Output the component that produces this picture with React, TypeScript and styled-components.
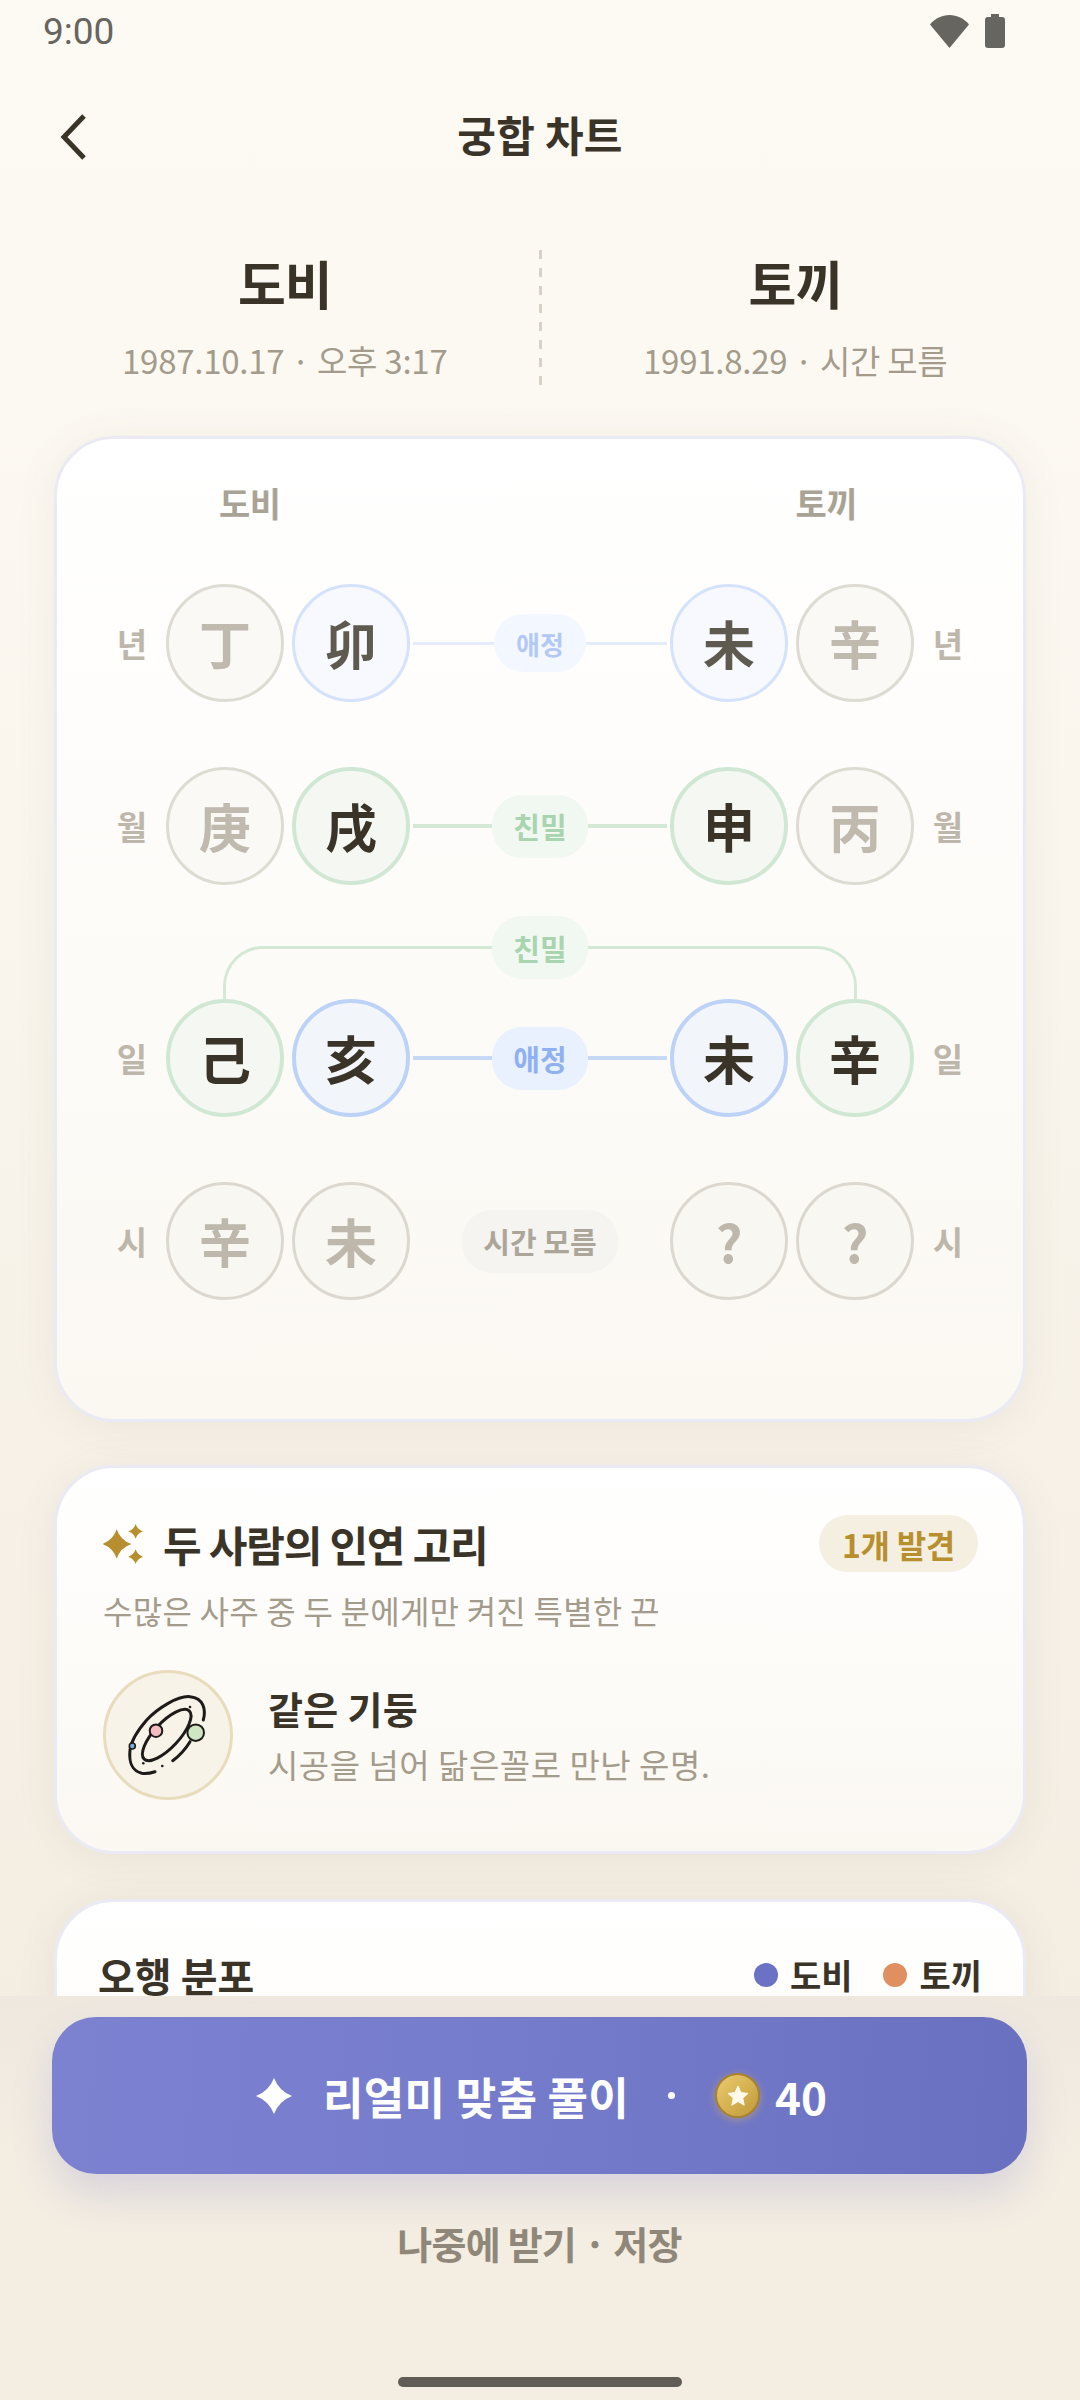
import styled, { createGlobalStyle } from "styled-components";

type Tone = "muted" | "faint" | "softBlue" | "green" | "blue";

const circleTones = {
  muted: { line: "#dedbd3", bg: "#faf9f6", ink: "#bfb9ae", width: 3 },
  faint: { line: "#dcd8cf", bg: "#f9f7f2", ink: "#bdb8ab", width: 3 },
  softBlue: { line: "#d4e2fb", bg: "#f7f9fe", ink: "#5f5a50", width: 3 },
  green: { line: "#d0e8d3", bg: "#f5f8f2", ink: "#3a3328", width: 4 },
  blue: { line: "#bcd2f7", bg: "#f2f5fa", ink: "#3a3328", width: 4 },
};

const chipTones = {
  softBlue: { bg: "#f3f7ff", ink: "#b3c9f5", line: "#e4ecfb", weight: 3 },
  green: { bg: "#f1f7f1", ink: "#a9d4b0", line: "#d3e8d5", weight: 4 },
  blue: { bg: "#e9f1fe", ink: "#8fb1f2", line: "#c5d8f6", weight: 4 },
  grey: { bg: "#f5f4f0", ink: "#aca69a", line: "transparent", weight: 0 },
};

type ChipTone = keyof typeof chipTones;

interface PillarRow {
  label: string;
  cells: [string, Tone][];
  chip: string;
  chipTone: ChipTone;
}

const rows: PillarRow[] = [
  {
    label: "년",
    cells: [["丁", "muted"], ["卯", "softBlue"], ["未", "softBlue"], ["辛", "muted"]],
    chip: "애정",
    chipTone: "softBlue",
  },
  {
    label: "월",
    cells: [["庚", "muted"], ["戌", "green"], ["申", "green"], ["丙", "muted"]],
    chip: "친밀",
    chipTone: "green",
  },
  {
    label: "일",
    cells: [["己", "green"], ["亥", "blue"], ["未", "blue"], ["辛", "green"]],
    chip: "애정",
    chipTone: "blue",
  },
  {
    label: "시",
    cells: [["辛", "faint"], ["未", "faint"], ["?", "faint"], ["?", "faint"]],
    chip: "시간 모름",
    chipTone: "grey",
  },
];

function Row({ row }: { row: PillarRow }) {
  return (
    <ChartRow>
      <RowLabel>{row.label}</RowLabel>
      <Circle $tone={row.cells[0][1]}>{row.cells[0][0]}</Circle>
      <Circle $tone={row.cells[1][1]}>{row.cells[1][0]}</Circle>
      <Bridge>
        <BridgeLine $tone={row.chipTone} />
        <Chip $tone={row.chipTone} $small={row.chipTone === "softBlue"}>
          {row.chip}
        </Chip>
        <BridgeLine $tone={row.chipTone} />
      </Bridge>
      <Circle $tone={row.cells[2][1]}>{row.cells[2][0]}</Circle>
      <Circle $tone={row.cells[3][1]}>{row.cells[3][0]}</Circle>
      <RowLabel>{row.label}</RowLabel>
    </ChartRow>
  );
}

function OrbitIcon() {
  return (
    <svg width="130" height="130" viewBox="0 0 130 130" fill="none" stroke="#1c1b19" strokeLinecap="round">
      <path
        d="M100.3 50C103 40 101 28 87 26.7C75 25.5 55 38 43.7 50C35 60 28 72 27 80C26 90 27 100 38.7 103.3C43 104 48 103 52 101.7"
        strokeWidth="3"
      />
      <path d="M87 71.7C82 80 76 86 69.7 90.7" strokeWidth="3" />
      <ellipse cx="63.7" cy="65" rx="33" ry="12.5" transform="rotate(-47 63.7 65)" strokeWidth="3" />
      <circle cx="53" cy="60.7" r="6.3" fill="#f2bcc0" strokeWidth="2" />
      <circle cx="92.7" cy="62.7" r="8.3" fill="#cfe6c3" strokeWidth="2" />
      <circle cx="29.3" cy="76" r="3" fill="#7fa9d8" strokeWidth="1.6" />
      <circle cx="87" cy="37" r="1.3" fill="#1c1b19" stroke="none" />
      <circle cx="40.3" cy="93.3" r="1.3" fill="#1c1b19" stroke="none" />
      <circle cx="59.3" cy="96" r="1.3" fill="#1c1b19" stroke="none" />
    </svg>
  );
}

export default function App() {
  return (
    <>
      <GlobalStyle />
      <Page>
        <StatusBar>
          <Clock>9:00</Clock>
          <StatusIcons>
            <svg width="39" height="33" viewBox="0 0 39 33">
              <path d="M0 9.5C5 3.5 12 0 19.5 0S34 3.5 39 9.5L19.5 33Z" fill="#66655f" />
            </svg>
            <svg width="20" height="34" viewBox="0 0 20 34">
              <path d="M6 0H14V3H17A3 3 0 0 1 20 6V31A3 3 0 0 1 17 34H3A3 3 0 0 1 0 31V6A3 3 0 0 1 3 3H6Z" fill="#66655f" />
            </svg>
          </StatusIcons>
        </StatusBar>

        <Header>
          <BackButton type="button">
            <svg width="26" height="46" viewBox="0 0 26 46" fill="none">
              <path d="M24 2L4 23L24 44" stroke="#3a3328" strokeWidth="5" />
            </svg>
          </BackButton>
          <Title>궁합 차트</Title>
        </Header>

        <People>
          <Person>
            <PersonName>도비</PersonName>
            <PersonDate>1987.10.17 · 오후 3:17</PersonDate>
          </Person>
          <PeopleDivider />
          <Person>
            <PersonName>토끼</PersonName>
            <PersonDate>1991.8.29 · 시간 모름</PersonDate>
          </Person>
        </People>

        <ChartCard>
          <ChartNames>
            <span>도비</span>
            <span>토끼</span>
          </ChartNames>
          <Row row={rows[0]} />
          <Row row={rows[1]} />
          <Arc>
            <ArcChip>
              <Chip $tone="green">친밀</Chip>
            </ArcChip>
          </Arc>
          <Row row={rows[2]} />
          <Row row={rows[3]} />
        </ChartCard>

        <BondCard>
          <BondHead>
            <BondTitle>
              <svg width="40" height="40" viewBox="0 0 38 38">
                <path d="M13 5Q16.5 15.5 27 19Q16.5 22.5 13 33Q9.5 22.5 -1 19Q9.5 15.5 13 5Z" fill="#b88f2f" />
                <path d="M31 0Q32.8 5.2 38 7Q32.8 8.8 31 14Q29.2 8.8 24 7Q29.2 5.2 31 0Z" fill="#b88f2f" />
                <path d="M31 24Q32.8 29.2 38 31Q32.8 32.8 31 38Q29.2 32.8 24 31Q29.2 29.2 31 24Z" fill="#b88f2f" />
              </svg>
              두 사람의 인연 고리
            </BondTitle>
            <FoundBadge>1개 발견</FoundBadge>
          </BondHead>
          <BondSub>수많은 사주 중 두 분에게만 켜진 특별한 끈</BondSub>
          <BondItem>
            <OrbitBadge>
              <OrbitIcon />
            </OrbitBadge>
            <BondText>
              <BondName>같은 기둥</BondName>
              <BondDesc>시공을 넘어 닮은꼴로 만난 운명.</BondDesc>
            </BondText>
          </BondItem>
        </BondCard>

        <ElementCard>
          <ElementTitle>오행 분포</ElementTitle>
          <Legend>
            <LegendItem $color="#6b71c4">도비</LegendItem>
            <LegendItem $color="#e09060">토끼</LegendItem>
          </Legend>
        </ElementCard>

        <BottomSheet>
          <CtaButton type="button">
            <svg width="36" height="36" viewBox="0 0 36 36">
              <path d="M18 0Q23 13 36 18Q23 23 18 36Q13 23 0 18Q13 13 18 0Z" fill="#fff" />
            </svg>
            <CtaLabel>리얼미 맞춤 풀이</CtaLabel>
            <CtaDot />
            <Coin>
              <svg width="24" height="24" viewBox="0 0 24 24">
                <path d="M12 2L15 8.6L22 9.4L16.8 14.2L18.2 21.2L12 17.6L5.8 21.2L7.2 14.2L2 9.4L9 8.6Z" fill="#fff9ea" strokeLinejoin="round" stroke="#fff9ea" />
              </svg>
            </Coin>
            <CtaPrice>40</CtaPrice>
          </CtaButton>
          <LaterLink>나중에 받기 · 저장</LaterLink>
          <HomeBar />
        </BottomSheet>
      </Page>
    </>
  );
}

const GlobalStyle = createGlobalStyle`
  html, body {
    margin: 0;
    padding: 0;
  }
  * {
    box-sizing: border-box;
  }
  body {
    font-family: "Noto Sans CJK KR", "Noto Sans", sans-serif;
    color: #3a3328;
  }
`;

const Page = styled.div`
  position: relative;
  width: 1080px;
  height: 2400px;
  overflow: hidden;
  background: linear-gradient(180deg, #fdfaf3 0%, #fcf9f2 16%, #f4ede2 84%);
`;

const StatusBar = styled.div`
  height: 62px;
  padding: 0 75px 0 43px;
  display: flex;
  align-items: center;
  justify-content: space-between;
`;

const Clock = styled.span`
  font-family: Roboto, sans-serif;
  font-size: 37px;
  color: #66655f;
`;

const StatusIcons = styled.div`
  display: flex;
  align-items: center;
  gap: 16px;
`;

const Header = styled.header`
  position: relative;
  height: 146px;
  display: flex;
  align-items: center;
  justify-content: center;
`;

const BackButton = styled.button`
  position: absolute;
  left: 60px;
  top: 52px;
  padding: 0;
  border: 0;
  background: none;
  display: flex;
`;

const Title = styled.h1`
  margin: -3px 0 0;
  font-size: 42px;
  line-height: 50px;
  font-weight: 700;
  letter-spacing: 0.3px;
  color: #3a3328;
`;

const People = styled.section`
  margin-top: 42px;
  height: 135px;
  padding: 0 31px;
  display: grid;
  grid-template-columns: 1fr 3px 1fr;
`;

const Person = styled.div`
  display: flex;
  flex-direction: column;
  align-items: center;
`;

const PersonName = styled.div`
  margin-top: 3px;
  font-size: 52px;
  line-height: 60px;
  font-weight: 700;
  letter-spacing: -1px;
  color: #3a3328;
`;

const PersonDate = styled.div`
  margin-top: 27px;
  font-size: 33px;
  line-height: 40px;
  font-weight: 400;
  letter-spacing: -0.25px;
  color: #a39b8b;
`;

const PeopleDivider = styled.div`
  width: 3px;
  height: 135px;
  background: repeating-linear-gradient(180deg, #d6d2c8 0 9px, transparent 9px 18px);
`;

const CardBase = styled.section`
  width: 972px;
  margin: 0 auto;
  border: 3px solid #eaeaf4;
  border-radius: 60px;
  background: linear-gradient(180deg, #ffffff 0%, #fbf8f2 100%);
  box-shadow: 0 4px 40px rgba(100, 85, 60, 0.08);
`;

const ChartCard = styled(CardBase)`
  height: 986px;
  margin-top: 51px;
  padding: 44px 45px 0;
`;

const ChartNames = styled.div`
  height: 40px;
  margin-bottom: 61px;
  padding: 0 121px 0 117px;
  display: flex;
  justify-content: space-between;
  font-size: 34px;
  line-height: 40px;
  font-weight: 700;
  letter-spacing: -0.5px;
  color: #a9a396;
`;

const ChartRow = styled.div`
  display: grid;
  grid-template-columns: 56px 118px 118px 1fr 118px 118px 56px;
  column-gap: 8px;
  align-items: center;
  margin-bottom: 65px;
`;

const RowLabel = styled.span`
  text-align: center;
  padding-left: 4px;
  font-size: 33px;
  line-height: 40px;
  font-weight: 700;
  color: #bdb7ab;

  &:last-child {
    padding: 0 4px 0 0;
  }
`;

const Circle = styled.div<{ $tone: Tone }>`
  width: 118px;
  height: 118px;
  border-radius: 50%;
  border: ${(p) => circleTones[p.$tone].width}px solid ${(p) => circleTones[p.$tone].line};
  background: ${(p) => circleTones[p.$tone].bg};
  color: ${(p) => circleTones[p.$tone].ink};
  display: flex;
  align-items: center;
  justify-content: center;
  font-size: 52px;
  line-height: 1;
  font-weight: 700;
`;

const Bridge = styled.div`
  margin: 0 -5px;
  display: flex;
  align-items: center;
`;

const BridgeLine = styled.span<{ $tone: ChipTone }>`
  flex: 1;
  height: ${(p) => chipTones[p.$tone].weight}px;
  background: ${(p) => chipTones[p.$tone].line};
`;

const Chip = styled.span<{ $tone: ChipTone; $small?: boolean }>`
  padding: 0 ${(p) => (p.$small ? "22px" : "21px")};
  height: ${(p) => (p.$small ? "58px" : "63px")};
  border-radius: 30px;
  display: flex;
  align-items: center;
  font-size: ${(p) => (p.$small ? "26px" : "29px")};
  font-weight: 700;
  white-space: nowrap;
  background: ${(p) => chipTones[p.$tone].bg};
  color: ${(p) => chipTones[p.$tone].ink};
`;

const Arc = styled.div`
  position: relative;
  width: 634px;
  height: 53px;
  margin: -4px 0 0 121px;
  border: 3px solid #d3e8d5;
  border-bottom: 0;
  border-radius: 40px 40px 0 0;
`;

const ArcChip = styled.div`
  position: absolute;
  left: 0;
  right: 0;
  top: -33px;
  display: flex;
  justify-content: center;
`;

const BondCard = styled(CardBase)`
  height: 389px;
  margin-top: 43px;
  padding: 47px 45px 0 46px;
`;

const BondHead = styled.div`
  display: flex;
  align-items: center;
  justify-content: space-between;
`;

const BondTitle = styled.h2`
  margin: 0;
  display: flex;
  align-items: center;
  gap: 20px;
  font-size: 42px;
  line-height: 50px;
  font-weight: 700;
  letter-spacing: -1.2px;
  color: #3a3328;
`;

const FoundBadge = styled.span`
  height: 57px;
  padding: 0 23px;
  border-radius: 29px;
  display: flex;
  align-items: center;
  background: #f5efe2;
  color: #b88f2f;
  font-size: 32px;
  font-weight: 700;
  letter-spacing: -0.3px;
`;

const BondSub = styled.p`
  margin: 19px 0 0;
  font-size: 32px;
  line-height: 38px;
  letter-spacing: 0.25px;
  color: #a39b8b;
`;

const BondItem = styled.div`
  margin-top: 41px;
  display: flex;
  align-items: center;
  gap: 35px;
`;

const OrbitBadge = styled.div`
  width: 130px;
  height: 130px;
  border-radius: 50%;
  border: 3px solid #e8dcbc;
  background: #f7f3e8;
  display: flex;
  align-items: center;
  justify-content: center;
  flex-shrink: 0;

  svg {
    flex-shrink: 0;
    margin: -3px;
  }
`;

const BondText = styled.div`
  display: flex;
  flex-direction: column;
  gap: 13px;
  margin-top: -2px;
`;

const BondName = styled.div`
  font-size: 38px;
  line-height: 46px;
  font-weight: 700;
  letter-spacing: 0.3px;
  color: #3a3328;
`;

const BondDesc = styled.div`
  font-size: 33px;
  line-height: 40px;
  letter-spacing: 0.5px;
  color: #a39b8b;
`;

const ElementCard = styled(CardBase)`
  height: 400px;
  margin-top: 45px;
  padding: 49px 41px 0;
  display: flex;
  justify-content: space-between;
  align-items: flex-start;
`;

const ElementTitle = styled.h2`
  margin: 0;
  font-size: 40px;
  line-height: 48px;
  font-weight: 700;
  color: #3a3328;
`;

const Legend = styled.div`
  display: flex;
  gap: 31px;
`;

const LegendItem = styled.span<{ $color: string }>`
  display: flex;
  align-items: center;
  gap: 12px;
  font-size: 34px;
  line-height: 48px;
  font-weight: 700;
  color: #3a3328;

  &::before {
    content: "";
    width: 24px;
    height: 24px;
    border-radius: 50%;
    background: ${(p) => p.$color};
  }
`;

const BottomSheet = styled.div`
  position: absolute;
  left: 0;
  right: 0;
  bottom: 0;
  height: 404px;
  padding: 21px 53px 0 52px;
  display: flex;
  flex-direction: column;
  align-items: center;
  background: linear-gradient(180deg, #eee8df 0%, #f4ede2 40%);
`;

const CtaButton = styled.button`
  width: 975px;
  height: 157px;
  padding: 0 0 0 4px;
  border: 0;
  border-radius: 44px;
  background: linear-gradient(95deg, #7c82d0 0%, #777dcd 40%, #6a70c0 100%);
  box-shadow: 0 20px 40px rgba(106, 112, 192, 0.2);
  display: flex;
  align-items: center;
  justify-content: center;
  color: #fff;
  font-family: inherit;
`;

const CtaLabel = styled.span`
  margin-left: 31px;
  font-size: 44px;
  line-height: 52px;
  font-weight: 700;
  letter-spacing: 0.3px;
`;

const CtaDot = styled.span`
  width: 7px;
  height: 7px;
  margin: 0 40px 0 39px;
  border-radius: 50%;
  background: #fff;
`;

const Coin = styled.span`
  width: 45px;
  height: 45px;
  border-radius: 50%;
  border: 2px solid #a8832f;
  background: linear-gradient(135deg, #ecca6c, #c09a3a);
  box-shadow: 0 2px 8px rgba(224, 184, 90, 0.45);
  display: flex;
  align-items: center;
  justify-content: center;
`;

const CtaPrice = styled.span`
  margin-left: 15px;
  font-size: 44px;
  line-height: 52px;
  font-weight: 700;
`;

const LaterLink = styled.div`
  margin-top: 46px;
  font-size: 38px;
  line-height: 46px;
  font-weight: 700;
  letter-spacing: -0.8px;
  color: #8f8779;
`;

const HomeBar = styled.div`
  width: 284px;
  height: 10px;
  margin-top: 111px;
  border-radius: 5px;
  background: #5f5d55;
`;
